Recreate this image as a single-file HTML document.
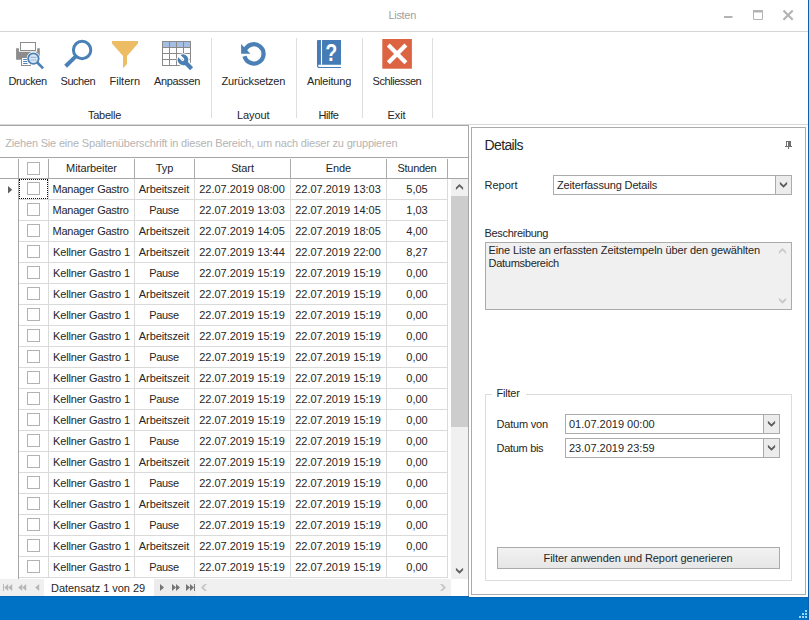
<!DOCTYPE html>
<html lang="de"><head><meta charset="utf-8"><title>Listen</title>
<style>
html,body{margin:0;padding:0;}
body{width:809px;height:620px;overflow:hidden;background:#fff;position:relative;font-family:"Liberation Sans",sans-serif;font-size:11px;color:#262626;}
.t{position:absolute;white-space:pre;line-height:12px;height:12px;font-size:11px;}
.sec{position:absolute;left:0;top:0;width:0;height:0;}
.r{position:absolute;}
.g{color:#9f9f9f;}
.gp{color:#b4b4b4;}
svg{position:absolute;overflow:visible;}
.cb{position:absolute;width:11px;height:11px;border:1px solid #b2b2b2;background:#fff;}
</style></head><body>

<header class="sec" id="titlebar">
<div class="t g" style="left:388.5px;top:9px;letter-spacing:-0.32px;">Listen</div>
<svg style="left:720px;top:6px" width="80" height="20" viewBox="720 6 80 20"><g fill="none" stroke="#b4b4b4"><path d="M724 17h8.5" stroke-width="2"/><path d="M753.5 11.5h9v8h-9z" stroke-width="1"/><path d="M753 11.25h10" stroke-width="2.5"/><path d="M783.5 10.5l9.2 9.2M792.7 10.5l-9.2 9.2" stroke-width="2.2"/></g></svg>
<div class="r" style="left:0px;top:31px;width:808px;height:1px;background:#d6d6d6;"></div>
</header>
<nav class="sec" id="ribbon">
<div class="r" style="left:211px;top:38px;width:1px;height:80px;background:#dedede;"></div>
<div class="r" style="left:296px;top:38px;width:1px;height:80px;background:#dedede;"></div>
<div class="r" style="left:362px;top:38px;width:1px;height:80px;background:#dedede;"></div>
<div class="r" style="left:432px;top:38px;width:1px;height:80px;background:#dedede;"></div>
<div class="t " style="left:8.5px;top:75px;letter-spacing:-0.38px;">Drucken</div>
<div class="t " style="left:60.5px;top:75px;letter-spacing:-0.45px;">Suchen</div>
<div class="t " style="left:109.5px;top:75px;letter-spacing:0px;">Filtern</div>
<div class="t " style="left:154px;top:75px;letter-spacing:-0.38px;">Anpassen</div>
<div class="t " style="left:221.5px;top:75px;letter-spacing:-0.2px;">Zurücksetzen</div>
<div class="t " style="left:307px;top:75px;letter-spacing:-0.2px;">Anleitung</div>
<div class="t " style="left:372.5px;top:75px;letter-spacing:-0.44px;">Schliessen</div>
<div class="t " style="left:88px;top:109px;letter-spacing:-0.25px;">Tabelle</div>
<div class="t " style="left:237px;top:109px;letter-spacing:-0.1px;">Layout</div>
<div class="t " style="left:318.5px;top:109px;letter-spacing:-0.4px;">Hilfe</div>
<div class="t " style="left:387.5px;top:109px;letter-spacing:-0.1px;">Exit</div>
<svg style="left:14px;top:40px" width="32" height="32" viewBox="14 40 32 32">
<path d="M16.1 48.2h2.8v3.5h18.3v-3.5h2.6v11.5h-23.7z" fill="#8c8c8c"/>
<rect x="20.5" y="42.5" width="15" height="8" fill="#fff" stroke="#8c8c8c"/>
<rect x="21.5" y="57.5" width="9" height="8" fill="#fff" stroke="#8c8c8c"/>
<path d="M23.2 59.5h4.3M23.2 61.5h4.3M23.2 63.5h4.3" stroke="#4f7fb4" stroke-width="1"/>
<circle cx="33.4" cy="58.6" r="6.8" fill="#fff"/>
<path d="M37 62.2l6.3 6.3" stroke="#fff" stroke-width="4.4"/>
<circle cx="33.4" cy="58.6" r="5.3" fill="#dbe6f3" stroke="#4a80b6" stroke-width="1.8"/>
<path d="M30.4 57.3h6M30.4 60h6" stroke="#9dbbdc" stroke-width="1.2"/>
<path d="M37.3 62.5l5.8 5.8" stroke="#4a80b6" stroke-width="2.6" stroke-linecap="butt"/>
</svg>
<svg style="left:62px;top:38px" width="34" height="32" viewBox="62 38 34 32">
<circle cx="82.1" cy="50" r="8.7" fill="#fff" stroke="#4a80b6" stroke-width="3"/>
<path d="M76.3 55.9l-10.7 10.3" stroke="#4a80b6" stroke-width="4"/>
</svg>
<svg style="left:110px;top:40px" width="30" height="30" viewBox="110 40 30 30">
<path d="M112 41h26v2.5l-11 12.5v8l-4 4.3v-12.3l-11 -12.5z" fill="#ecbd65"/>
</svg>
<svg style="left:160px;top:40px" width="34" height="32" viewBox="160 40 34 32">
<rect x="162.5" y="41.5" width="28" height="24" fill="#fff" stroke="#8a8a8a"/>
<rect x="163" y="42" width="27" height="6" fill="#a4bfe3"/>
<path d="M162.5 47.5h28M162.5 53.5h28M162.5 59.5h28M169.5 41.5v24M176.5 41.5v24M183.5 41.5v24" stroke="#8a8a8a" stroke-width="1" fill="none"/>
<g transform="translate(183 59.8) rotate(46)">
<path d="M-5.16 -1.6A5.4 5.4 0 1 1 -5.16 1.6L-0.5 1.6A1.6 1.6 0 0 0 -0.5 -1.6ZM3 -2.1h9.4v4.2h-9.4z" fill="#fff" stroke="#fff" stroke-width="2.4" stroke-linejoin="round"/>
<path d="M-5.16 -1.6A5.4 5.4 0 1 1 -5.16 1.6L-0.5 1.6A1.6 1.6 0 0 0 -0.5 -1.6ZM3 -2.1h9.4v4.2h-9.4z" fill="#4a80b6"/>
</g>
</svg>
<svg style="left:238px;top:40px" width="32" height="30" viewBox="238 40 32 30">
<path d="M244.83 50.6A9.65 9.65 0 1 1 244.54 56.23" fill="none" stroke="#4a80b6" stroke-width="4.3"/>
<path d="M241.1 44v9.8h9.3z" fill="#4a80b6"/>
</svg>
<svg style="left:316px;top:39px" width="28" height="32" viewBox="316 39 28 32">
<path d="M318 40h23v24.8h-24v-23.8q0 -1 1 -1z" fill="#467cb6"/>
<path d="M317.6 64v1.4q0 2.1 2.1 2.1h21.3" fill="none" stroke="#467cb6" stroke-width="1.2"/>
<path d="M321.5 40v24.8" stroke="#fff" stroke-width="1.1"/>
<text transform="translate(331.3 61.4) scale(0.8 1)" text-anchor="middle" font-family="Liberation Sans, sans-serif" font-weight="bold" font-size="24.5" fill="#fff">?</text>
</svg>
<svg style="left:382px;top:39px" width="30" height="30" viewBox="382 39 30 30">
<rect x="382.3" y="39" width="29.6" height="29.7" fill="#dc6442"/>
<path d="M388.3 45.1l17.6 17.6M405.9 45.1l-17.6 17.6" stroke="#fff" stroke-width="4.2"/>
</svg>
<div class="r" style="left:0px;top:124px;width:808px;height:1px;background:#d8d8d8;"></div>
</nav>
<main class="sec" id="grid">
<div class="r" style="left:0px;top:125px;width:469px;height:1px;background:#a6a6a6;"></div>
<div class="r" style="left:468px;top:125px;width:1px;height:472px;background:#a6a6a6;"></div>
<div class="t gp" style="left:5.3px;top:137px;letter-spacing:-0.185px;">Ziehen Sie eine Spaltenüberschrift in diesen Bereich, um nach dieser zu gruppieren</div>
<div class="r" style="left:0px;top:157px;width:468px;height:1px;background:#a6a6a6;"></div>
<div class="r" style="left:0px;top:178px;width:468px;height:1px;background:#a6a6a6;"></div>
<div class="r" style="left:18px;top:159px;width:1px;height:19px;background:#ababab;"></div>
<div class="r" style="left:48px;top:159px;width:1px;height:19px;background:#ababab;"></div>
<div class="r" style="left:134px;top:159px;width:1px;height:19px;background:#ababab;"></div>
<div class="r" style="left:194px;top:159px;width:1px;height:19px;background:#ababab;"></div>
<div class="r" style="left:290px;top:159px;width:1px;height:19px;background:#ababab;"></div>
<div class="r" style="left:386px;top:159px;width:1px;height:19px;background:#ababab;"></div>
<div class="r" style="left:447px;top:159px;width:1px;height:19px;background:#ababab;"></div>
<div class="cb" style="left:27px;top:162px"></div>
<div class="t " style="left:49px;top:162px;width:85px;text-align:center;letter-spacing:-0.1px;">Mitarbeiter</div>
<div class="t " style="left:135px;top:162px;width:59px;text-align:center;letter-spacing:-0.1px;">Typ</div>
<div class="t " style="left:195px;top:162px;width:95px;text-align:center;letter-spacing:-0.1px;">Start</div>
<div class="t " style="left:291px;top:162px;width:95px;text-align:center;letter-spacing:-0.1px;">Ende</div>
<div class="t " style="left:387px;top:162px;width:60px;text-align:center;letter-spacing:-0.3px;">Stunden</div>
<div class="r" style="left:18px;top:179px;width:1px;height:400px;background:#a6a6a6;"></div>
<div class="r" style="left:48px;top:179px;width:1px;height:399px;background:#dadada;"></div>
<div class="r" style="left:134px;top:179px;width:1px;height:399px;background:#dadada;"></div>
<div class="r" style="left:194px;top:179px;width:1px;height:399px;background:#dadada;"></div>
<div class="r" style="left:290px;top:179px;width:1px;height:399px;background:#dadada;"></div>
<div class="r" style="left:386px;top:179px;width:1px;height:399px;background:#dadada;"></div>
<div class="r" style="left:447px;top:179px;width:1px;height:399px;background:#dadada;"></div>
<div class="r" style="left:19px;top:199px;width:429px;height:1px;background:#dadada;"></div>
<div class="cb" style="left:27px;top:182px"></div>
<div class="t " style="left:52.5px;top:183px;letter-spacing:-0.23px;">Manager Gastro</div>
<div class="t " style="left:134.5px;top:183px;width:59px;text-align:center;letter-spacing:-0.1px;">Arbeitszeit</div>
<div class="t " style="left:194.5px;top:183px;width:95px;text-align:center;letter-spacing:0px;">22.07.2019 08:00</div>
<div class="t " style="left:290.5px;top:183px;width:95px;text-align:center;letter-spacing:0px;">22.07.2019 13:03</div>
<div class="t " style="left:387px;top:183px;width:60px;text-align:center;letter-spacing:0px;">5,05</div>
<div class="r" style="left:19px;top:220px;width:429px;height:1px;background:#dadada;"></div>
<div class="cb" style="left:27px;top:203px"></div>
<div class="t " style="left:52.5px;top:204px;letter-spacing:-0.23px;">Manager Gastro</div>
<div class="t " style="left:134.5px;top:204px;width:59px;text-align:center;letter-spacing:-0.32px;">Pause</div>
<div class="t " style="left:194.5px;top:204px;width:95px;text-align:center;letter-spacing:0px;">22.07.2019 13:03</div>
<div class="t " style="left:290.5px;top:204px;width:95px;text-align:center;letter-spacing:0px;">22.07.2019 14:05</div>
<div class="t " style="left:387px;top:204px;width:60px;text-align:center;letter-spacing:0px;">1,03</div>
<div class="r" style="left:19px;top:241px;width:429px;height:1px;background:#dadada;"></div>
<div class="cb" style="left:27px;top:224px"></div>
<div class="t " style="left:52.5px;top:225px;letter-spacing:-0.23px;">Manager Gastro</div>
<div class="t " style="left:134.5px;top:225px;width:59px;text-align:center;letter-spacing:-0.1px;">Arbeitszeit</div>
<div class="t " style="left:194.5px;top:225px;width:95px;text-align:center;letter-spacing:0px;">22.07.2019 14:05</div>
<div class="t " style="left:290.5px;top:225px;width:95px;text-align:center;letter-spacing:0px;">22.07.2019 18:05</div>
<div class="t " style="left:387px;top:225px;width:60px;text-align:center;letter-spacing:0px;">4,00</div>
<div class="r" style="left:19px;top:262px;width:429px;height:1px;background:#dadada;"></div>
<div class="cb" style="left:27px;top:245px"></div>
<div class="t " style="left:53px;top:246px;letter-spacing:-0.16px;">Kellner Gastro 1</div>
<div class="t " style="left:134.5px;top:246px;width:59px;text-align:center;letter-spacing:-0.1px;">Arbeitszeit</div>
<div class="t " style="left:194.5px;top:246px;width:95px;text-align:center;letter-spacing:0px;">22.07.2019 13:44</div>
<div class="t " style="left:290.5px;top:246px;width:95px;text-align:center;letter-spacing:0px;">22.07.2019 22:00</div>
<div class="t " style="left:387px;top:246px;width:60px;text-align:center;letter-spacing:0px;">8,27</div>
<div class="r" style="left:19px;top:283px;width:429px;height:1px;background:#dadada;"></div>
<div class="cb" style="left:27px;top:266px"></div>
<div class="t " style="left:53px;top:267px;letter-spacing:-0.16px;">Kellner Gastro 1</div>
<div class="t " style="left:134.5px;top:267px;width:59px;text-align:center;letter-spacing:-0.32px;">Pause</div>
<div class="t " style="left:194.5px;top:267px;width:95px;text-align:center;letter-spacing:0px;">22.07.2019 15:19</div>
<div class="t " style="left:290.5px;top:267px;width:95px;text-align:center;letter-spacing:0px;">22.07.2019 15:19</div>
<div class="t " style="left:387px;top:267px;width:60px;text-align:center;letter-spacing:0px;">0,00</div>
<div class="r" style="left:19px;top:304px;width:429px;height:1px;background:#dadada;"></div>
<div class="cb" style="left:27px;top:287px"></div>
<div class="t " style="left:53px;top:288px;letter-spacing:-0.16px;">Kellner Gastro 1</div>
<div class="t " style="left:134.5px;top:288px;width:59px;text-align:center;letter-spacing:-0.1px;">Arbeitszeit</div>
<div class="t " style="left:194.5px;top:288px;width:95px;text-align:center;letter-spacing:0px;">22.07.2019 15:19</div>
<div class="t " style="left:290.5px;top:288px;width:95px;text-align:center;letter-spacing:0px;">22.07.2019 15:19</div>
<div class="t " style="left:387px;top:288px;width:60px;text-align:center;letter-spacing:0px;">0,00</div>
<div class="r" style="left:19px;top:325px;width:429px;height:1px;background:#dadada;"></div>
<div class="cb" style="left:27px;top:308px"></div>
<div class="t " style="left:53px;top:309px;letter-spacing:-0.16px;">Kellner Gastro 1</div>
<div class="t " style="left:134.5px;top:309px;width:59px;text-align:center;letter-spacing:-0.32px;">Pause</div>
<div class="t " style="left:194.5px;top:309px;width:95px;text-align:center;letter-spacing:0px;">22.07.2019 15:19</div>
<div class="t " style="left:290.5px;top:309px;width:95px;text-align:center;letter-spacing:0px;">22.07.2019 15:19</div>
<div class="t " style="left:387px;top:309px;width:60px;text-align:center;letter-spacing:0px;">0,00</div>
<div class="r" style="left:19px;top:346px;width:429px;height:1px;background:#dadada;"></div>
<div class="cb" style="left:27px;top:329px"></div>
<div class="t " style="left:53px;top:330px;letter-spacing:-0.16px;">Kellner Gastro 1</div>
<div class="t " style="left:134.5px;top:330px;width:59px;text-align:center;letter-spacing:-0.1px;">Arbeitszeit</div>
<div class="t " style="left:194.5px;top:330px;width:95px;text-align:center;letter-spacing:0px;">22.07.2019 15:19</div>
<div class="t " style="left:290.5px;top:330px;width:95px;text-align:center;letter-spacing:0px;">22.07.2019 15:19</div>
<div class="t " style="left:387px;top:330px;width:60px;text-align:center;letter-spacing:0px;">0,00</div>
<div class="r" style="left:19px;top:367px;width:429px;height:1px;background:#dadada;"></div>
<div class="cb" style="left:27px;top:350px"></div>
<div class="t " style="left:53px;top:351px;letter-spacing:-0.16px;">Kellner Gastro 1</div>
<div class="t " style="left:134.5px;top:351px;width:59px;text-align:center;letter-spacing:-0.32px;">Pause</div>
<div class="t " style="left:194.5px;top:351px;width:95px;text-align:center;letter-spacing:0px;">22.07.2019 15:19</div>
<div class="t " style="left:290.5px;top:351px;width:95px;text-align:center;letter-spacing:0px;">22.07.2019 15:19</div>
<div class="t " style="left:387px;top:351px;width:60px;text-align:center;letter-spacing:0px;">0,00</div>
<div class="r" style="left:19px;top:388px;width:429px;height:1px;background:#dadada;"></div>
<div class="cb" style="left:27px;top:371px"></div>
<div class="t " style="left:53px;top:372px;letter-spacing:-0.16px;">Kellner Gastro 1</div>
<div class="t " style="left:134.5px;top:372px;width:59px;text-align:center;letter-spacing:-0.1px;">Arbeitszeit</div>
<div class="t " style="left:194.5px;top:372px;width:95px;text-align:center;letter-spacing:0px;">22.07.2019 15:19</div>
<div class="t " style="left:290.5px;top:372px;width:95px;text-align:center;letter-spacing:0px;">22.07.2019 15:19</div>
<div class="t " style="left:387px;top:372px;width:60px;text-align:center;letter-spacing:0px;">0,00</div>
<div class="r" style="left:19px;top:409px;width:429px;height:1px;background:#dadada;"></div>
<div class="cb" style="left:27px;top:392px"></div>
<div class="t " style="left:53px;top:393px;letter-spacing:-0.16px;">Kellner Gastro 1</div>
<div class="t " style="left:134.5px;top:393px;width:59px;text-align:center;letter-spacing:-0.32px;">Pause</div>
<div class="t " style="left:194.5px;top:393px;width:95px;text-align:center;letter-spacing:0px;">22.07.2019 15:19</div>
<div class="t " style="left:290.5px;top:393px;width:95px;text-align:center;letter-spacing:0px;">22.07.2019 15:19</div>
<div class="t " style="left:387px;top:393px;width:60px;text-align:center;letter-spacing:0px;">0,00</div>
<div class="r" style="left:19px;top:430px;width:429px;height:1px;background:#dadada;"></div>
<div class="cb" style="left:27px;top:413px"></div>
<div class="t " style="left:53px;top:414px;letter-spacing:-0.16px;">Kellner Gastro 1</div>
<div class="t " style="left:134.5px;top:414px;width:59px;text-align:center;letter-spacing:-0.1px;">Arbeitszeit</div>
<div class="t " style="left:194.5px;top:414px;width:95px;text-align:center;letter-spacing:0px;">22.07.2019 15:19</div>
<div class="t " style="left:290.5px;top:414px;width:95px;text-align:center;letter-spacing:0px;">22.07.2019 15:19</div>
<div class="t " style="left:387px;top:414px;width:60px;text-align:center;letter-spacing:0px;">0,00</div>
<div class="r" style="left:19px;top:451px;width:429px;height:1px;background:#dadada;"></div>
<div class="cb" style="left:27px;top:434px"></div>
<div class="t " style="left:53px;top:435px;letter-spacing:-0.16px;">Kellner Gastro 1</div>
<div class="t " style="left:134.5px;top:435px;width:59px;text-align:center;letter-spacing:-0.32px;">Pause</div>
<div class="t " style="left:194.5px;top:435px;width:95px;text-align:center;letter-spacing:0px;">22.07.2019 15:19</div>
<div class="t " style="left:290.5px;top:435px;width:95px;text-align:center;letter-spacing:0px;">22.07.2019 15:19</div>
<div class="t " style="left:387px;top:435px;width:60px;text-align:center;letter-spacing:0px;">0,00</div>
<div class="r" style="left:19px;top:472px;width:429px;height:1px;background:#dadada;"></div>
<div class="cb" style="left:27px;top:455px"></div>
<div class="t " style="left:53px;top:456px;letter-spacing:-0.16px;">Kellner Gastro 1</div>
<div class="t " style="left:134.5px;top:456px;width:59px;text-align:center;letter-spacing:-0.1px;">Arbeitszeit</div>
<div class="t " style="left:194.5px;top:456px;width:95px;text-align:center;letter-spacing:0px;">22.07.2019 15:19</div>
<div class="t " style="left:290.5px;top:456px;width:95px;text-align:center;letter-spacing:0px;">22.07.2019 15:19</div>
<div class="t " style="left:387px;top:456px;width:60px;text-align:center;letter-spacing:0px;">0,00</div>
<div class="r" style="left:19px;top:493px;width:429px;height:1px;background:#dadada;"></div>
<div class="cb" style="left:27px;top:476px"></div>
<div class="t " style="left:53px;top:477px;letter-spacing:-0.16px;">Kellner Gastro 1</div>
<div class="t " style="left:134.5px;top:477px;width:59px;text-align:center;letter-spacing:-0.32px;">Pause</div>
<div class="t " style="left:194.5px;top:477px;width:95px;text-align:center;letter-spacing:0px;">22.07.2019 15:19</div>
<div class="t " style="left:290.5px;top:477px;width:95px;text-align:center;letter-spacing:0px;">22.07.2019 15:19</div>
<div class="t " style="left:387px;top:477px;width:60px;text-align:center;letter-spacing:0px;">0,00</div>
<div class="r" style="left:19px;top:514px;width:429px;height:1px;background:#dadada;"></div>
<div class="cb" style="left:27px;top:497px"></div>
<div class="t " style="left:53px;top:498px;letter-spacing:-0.16px;">Kellner Gastro 1</div>
<div class="t " style="left:134.5px;top:498px;width:59px;text-align:center;letter-spacing:-0.1px;">Arbeitszeit</div>
<div class="t " style="left:194.5px;top:498px;width:95px;text-align:center;letter-spacing:0px;">22.07.2019 15:19</div>
<div class="t " style="left:290.5px;top:498px;width:95px;text-align:center;letter-spacing:0px;">22.07.2019 15:19</div>
<div class="t " style="left:387px;top:498px;width:60px;text-align:center;letter-spacing:0px;">0,00</div>
<div class="r" style="left:19px;top:535px;width:429px;height:1px;background:#dadada;"></div>
<div class="cb" style="left:27px;top:518px"></div>
<div class="t " style="left:53px;top:519px;letter-spacing:-0.16px;">Kellner Gastro 1</div>
<div class="t " style="left:134.5px;top:519px;width:59px;text-align:center;letter-spacing:-0.32px;">Pause</div>
<div class="t " style="left:194.5px;top:519px;width:95px;text-align:center;letter-spacing:0px;">22.07.2019 15:19</div>
<div class="t " style="left:290.5px;top:519px;width:95px;text-align:center;letter-spacing:0px;">22.07.2019 15:19</div>
<div class="t " style="left:387px;top:519px;width:60px;text-align:center;letter-spacing:0px;">0,00</div>
<div class="r" style="left:19px;top:556px;width:429px;height:1px;background:#dadada;"></div>
<div class="cb" style="left:27px;top:539px"></div>
<div class="t " style="left:53px;top:540px;letter-spacing:-0.16px;">Kellner Gastro 1</div>
<div class="t " style="left:134.5px;top:540px;width:59px;text-align:center;letter-spacing:-0.1px;">Arbeitszeit</div>
<div class="t " style="left:194.5px;top:540px;width:95px;text-align:center;letter-spacing:0px;">22.07.2019 15:19</div>
<div class="t " style="left:290.5px;top:540px;width:95px;text-align:center;letter-spacing:0px;">22.07.2019 15:19</div>
<div class="t " style="left:387px;top:540px;width:60px;text-align:center;letter-spacing:0px;">0,00</div>
<div class="r" style="left:19px;top:577px;width:429px;height:1px;background:#dadada;"></div>
<div class="cb" style="left:27px;top:560px"></div>
<div class="t " style="left:53px;top:561px;letter-spacing:-0.16px;">Kellner Gastro 1</div>
<div class="t " style="left:134.5px;top:561px;width:59px;text-align:center;letter-spacing:-0.32px;">Pause</div>
<div class="t " style="left:194.5px;top:561px;width:95px;text-align:center;letter-spacing:0px;">22.07.2019 15:19</div>
<div class="t " style="left:290.5px;top:561px;width:95px;text-align:center;letter-spacing:0px;">22.07.2019 15:19</div>
<div class="t " style="left:387px;top:561px;width:60px;text-align:center;letter-spacing:0px;">0,00</div>
<div class="r" style="left:19px;top:179px;width:27px;height:18px;border:1px dotted #111;"></div>
<svg style="left:8px;top:186px" width="5" height="8" viewBox="0 0 5 8"><path d="M0 0l4.2 3.7l-4.2 3.7z" fill="#606060"/></svg>
<div class="r" style="left:451px;top:179px;width:17px;height:400px;background:#f0f0f0;"></div>
<div class="r" style="left:451px;top:196px;width:17px;height:231px;background:#cdcdcd;"></div>
<svg style="left:451px;top:179px" width="17" height="17" viewBox="0 0 17 17"><path d="M8.5 5l3.6 3.5v2.5l-3.6 -3.4l-3.6 3.4v-2.5z" fill="#606060"/></svg>
<svg style="left:451px;top:562px" width="17" height="17" viewBox="0 0 17 17"><path d="M8.5 11.7l3.6 -3.5v-2.5l-3.6 3.4l-3.6 -3.4v2.5z" fill="#606060"/></svg>
<div class="r" style="left:0px;top:579px;width:44px;height:18px;background:#f0f0f0;"></div>
<div class="r" style="left:154px;top:579px;width:297px;height:18px;background:#f0f0f0;"></div>
<div class="r" style="left:154px;top:579px;width:42px;height:18px;background:#ececec;"></div>
<div class="t " style="left:51px;top:582px;letter-spacing:-0.04px;">Datensatz 1 von 29</div>
<svg style="left:0px;top:579px" width="460" height="18" viewBox="0 579 460 18">
<g fill="#b6b6b6">
<path d="M3 584h1v7h-1z M4.2 587.5l4 -3.5v7z M8.2 587.5l4 -3.5v7z"/>
<path d="M18.2 587.5l4 -3.5v7z M22.2 587.5l4 -3.5v7z"/>
<path d="M35.2 587.5l4 -3.5v7z"/>
</g>
<g fill="#757575">
<path d="M160 584l4 3.5l-4 3.5z"/>
<path d="M172 584l4 3.5l-4 3.5z M176 584l4 3.5l-4 3.5z"/>
<path d="M186 584l4 3.5l-4 3.5z M190 584l4 3.5l-4 3.5z M194 584h1v7h-1z"/>
</g>
<g fill="#c6c6c6">
<path d="M201 587.5l3.5 -3.6h2.5l-3.4 3.6l3.4 3.6h-2.5z"/>
<path d="M446 587.5l-3.5 -3.6h-2.5l3.4 3.6l-3.4 3.6h2.5z"/>
</g>
</svg>
</main>
<aside class="sec" id="details">
<div class="r" style="left:471px;top:127px;width:333px;height:466px;border:1px solid #ababab;box-sizing:content-box;background:#fff"></div>
<div class="t " style="left:484.5px;top:139px;letter-spacing:-0.62px;font-size:14px;">Details</div>
<svg style="left:784px;top:140px" width="10" height="10" viewBox="784 140 10 10"><path d="M786 141h5v5h1v1h-3v2h-1v-2h-3v-1h1zM787 142v4h1v-4z" fill="#707070" fill-rule="evenodd"/></svg>
<div class="t " style="left:484.5px;top:179px;letter-spacing:0px;">Report</div>
<div class="r" style="left:553px;top:175px;width:237px;height:18px;border:1px solid #ababab;background:#fff"></div>
<div class="r" style="left:775px;top:176px;width:16px;height:18px;background:#ececec;border-left:1px solid #ababab;box-sizing:border-box"></div>
<svg style="left:776px;top:176px" width="15" height="18" viewBox="0 0 15 18"><path d="M7.5 11.7l3.6 -3.4v-2.5l-3.6 3.4l-3.6 -3.4v2.5z" fill="#585858"/></svg>
<div class="t " style="left:557px;top:179px;letter-spacing:-0.15px;">Zeiterfassung Details</div>
<div class="t " style="left:484.5px;top:227px;letter-spacing:-0.3px;">Beschreibung</div>
<div class="r" style="left:485px;top:242px;width:305px;height:66px;border:1px solid #ababab;background:#f0f0f0"></div>
<div class="t " style="left:488.5px;top:244px;letter-spacing:-0.11px;">Eine Liste an erfassten Zeitstempeln über den gewählten</div>
<div class="t " style="left:488.5px;top:257px;letter-spacing:-0.27px;">Datumsbereich</div>
<svg style="left:778px;top:246px" width="10" height="60" viewBox="778 246 10 60"><path d="M782.5 248l3.6 3.5v2.5l-3.6 -3.4l-3.6 3.4v-2.5zM782.5 303.7l3.6 -3.5v-2.5l-3.6 3.4l-3.6 -3.4v2.5z" fill="#c9c9c9"/></svg>
<div class="r" style="left:485px;top:394px;width:305px;height:185px;border:1px solid #dcdcdc;box-sizing:content-box"></div>
<div class="r" style="left:492px;top:390px;width:34px;height:10px;background:#fff;"></div>
<div class="t " style="left:496.5px;top:387px;letter-spacing:-0.2px;">Filter</div>
<div class="t " style="left:496.5px;top:418px;letter-spacing:-0.2px;">Datum von</div>
<div class="t " style="left:496.5px;top:442px;letter-spacing:-0.3px;">Datum bis</div>
<div class="r" style="left:565px;top:414px;width:213px;height:18px;border:1px solid #ababab;background:#fff"></div>
<div class="r" style="left:763px;top:415px;width:16px;height:18px;background:#ececec;border-left:1px solid #ababab;box-sizing:border-box"></div>
<svg style="left:764px;top:415px" width="15" height="18" viewBox="0 0 15 18"><path d="M7.5 11.7l3.6 -3.4v-2.5l-3.6 3.4l-3.6 -3.4v2.5z" fill="#585858"/></svg>
<div class="t " style="left:569px;top:418px;letter-spacing:0px;">01.07.2019 00:00</div>
<div class="r" style="left:565px;top:438px;width:213px;height:18px;border:1px solid #ababab;background:#fff"></div>
<div class="r" style="left:763px;top:439px;width:16px;height:18px;background:#ececec;border-left:1px solid #ababab;box-sizing:border-box"></div>
<svg style="left:764px;top:439px" width="15" height="18" viewBox="0 0 15 18"><path d="M7.5 11.7l3.6 -3.4v-2.5l-3.6 3.4l-3.6 -3.4v2.5z" fill="#585858"/></svg>
<div class="t " style="left:569px;top:442px;letter-spacing:0px;">23.07.2019 23:59</div>
<div class="r" style="left:497px;top:547px;width:281px;height:20px;border:1px solid #ababab;background:linear-gradient(#f2f2f2,#e6e6e6)"></div>
<div class="t " style="left:496.5px;top:552px;width:283px;text-align:center;letter-spacing:-0.065px;">Filter anwenden und Report generieren</div>
</aside>
<footer class="sec" id="statusbar">
<div class="r" style="left:0px;top:597px;width:809px;height:23px;background:#0072c6;"></div>
<div class="r" style="left:0px;top:596px;width:469px;height:1px;background:#0a66b3;"></div>
<div class="r" style="left:469px;top:597px;width:340px;height:1px;background:#0a66b3;"></div>
<div class="r" style="left:808px;top:0px;width:1px;height:620px;background:#0b62ac;"></div>
<svg style="left:798px;top:609px" width="10" height="10" viewBox="0 0 10 10"><g fill="#9dd6fb"><rect x="7" y="1" width="2" height="2"/><rect x="4" y="4" width="2" height="2"/><rect x="7" y="4" width="2" height="2"/><rect x="1" y="7" width="2" height="2"/><rect x="4" y="7" width="2" height="2"/><rect x="7" y="7" width="2" height="2"/></g></svg>
</footer>
</body></html>
